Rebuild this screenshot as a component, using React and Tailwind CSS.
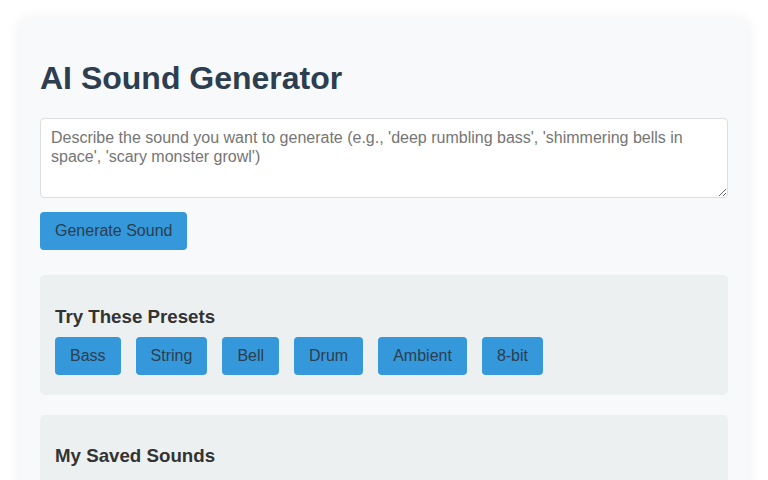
const presets = ["Bass", "String", "Bell", "Drum", "Ambient", "8-bit"];

export default function App() {
  return (
    <div className="min-h-screen bg-white px-5 pt-[19px] font-['Liberation_Sans',Arial,sans-serif]">
      <div className="rounded-lg bg-[#f8f9fa] px-5 pt-[20px] pb-5 shadow-[0_0_14px_rgba(0,0,0,0.07)]">
        <h1 className="mt-[21px] mb-[21.5px] text-[32px] leading-[36.8px] font-bold text-[#2c3e50]">
          AI Sound Generator
        </h1>
        <textarea
          className="block h-[80px] w-full resize-y rounded-[4px] border border-[#ddd] bg-white px-[10px] py-[10px] text-base leading-[18.4px] text-[#333] placeholder:text-[#757575] outline-none"
          placeholder="Describe the sound you want to generate (e.g., 'deep rumbling bass', 'shimmering bells in space', 'scary monster growl')"
        />
        <button className="mt-[14px] h-[38px] rounded-[4px] bg-[#3498db] px-[15px] text-base leading-[18.4px] text-[#2c3e50]">
          Generate Sound
        </button>

        <div className="mt-[25px] rounded-[5px] bg-[#ecf0f1] px-[15px] pt-[15px] pb-[20px]">
          <h3 className="mt-[15.5px] mb-[9.5px] text-[18.72px] leading-[21.5px] font-bold text-[#333]">
            Try These Presets
          </h3>
          <div className="flex flex-wrap gap-x-[15px]">
            {presets.map((p) => (
              <button
                key={p}
                className="h-[38px] rounded-[4px] bg-[#3498db] px-[15px] text-base leading-[18.4px] text-[#2c3e50]"
              >
                {p}
              </button>
            ))}
          </div>
        </div>

        <div className="mt-[20px] rounded-[5px] bg-[#ecf0f1] px-[15px] pt-[15px] pb-[20px]">
          <h3 className="mt-[15.5px] mb-[9.5px] text-[18.72px] leading-[21.5px] font-bold text-[#333]">
            My Saved Sounds
          </h3>
        </div>
      </div>
    </div>
  );
}
